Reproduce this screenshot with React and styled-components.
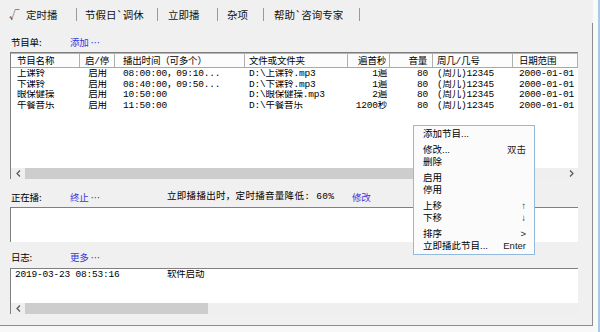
import React from 'react';
import styled, { createGlobalStyle } from 'styled-components';

const GlobalStyle = createGlobalStyle`
  html, body {
    margin: 0;
    padding: 0;
    background: #f8f8f8;
  }
  body {
    width: 600px;
    height: 332px;
    overflow: hidden;
    font-family: "Liberation Mono", "Noto Sans CJK SC", monospace;
    font-size: 9.5px;
    letter-spacing: -0.2px;
    color: #000;
  }
`;

const Window = styled.div`
  position: relative;
  display: flex;
  width: 600px;
  height: 332px;
  background: #f8f8f8;
`;

const Main = styled.div`
  width: 593px;
  display: flex;
  flex-direction: column;
`;

const Frame = styled.div`
  flex: 1;
  border-right: 2px solid #a8c9e8;
  background: #f9f9f9;
`;

const TabBar = styled.div`
  display: flex;
  align-items: center;
  height: 23px;
  padding-top: 5px;
  box-sizing: border-box;
  background: #f0f0f0;
`;

const Tab = styled.div`
  width: ${(p) => p.$w}px;
  padding-left: ${(p) => p.$pl}px;
  box-sizing: border-box;
  height: 13px;
  line-height: 13px;
  border-right: 1px solid #9a9a9a;
  font-family: "Noto Sans CJK SC", sans-serif;
  font-size: 10.5px;
  letter-spacing: 0;
  color: #111;
  white-space: nowrap;
`;

const Check = styled.span`
  display: inline-block;
  width: 17px;
  color: #333;
`;

const Panel = styled.div`
  height: 303px;
  box-sizing: border-box;
  display: flex;
  flex-direction: column;
  padding: 13px 14px 0 10px;
  background: #f0f0f0;
  border-right: 1px solid #8c8c8c;
  border-bottom: 1px solid #8c8c8c;
`;

const LabelRow = styled.div`
  display: flex;
  align-items: center;
  height: 12px;
  line-height: 12px;
  padding-left: 1px;
  margin-top: ${(p) => p.$mt || 0}px;
  white-space: nowrap;
`;

const Label = styled.span`
  width: 59px;
  font-family: "Noto Sans CJK SC", sans-serif;
`;

const Link = styled.span`
  width: ${(p) => (p.$w ? `${p.$w}px` : 'auto')};
  color: #3535dc;
  font-family: "Noto Sans CJK SC", sans-serif;
`;

const Message = styled.span`
  width: 185px;
  letter-spacing: 0.3px;
`;

const Box = styled.div`
  height: ${(p) => p.$h}px;
  margin-top: ${(p) => p.$mt}px;
  box-sizing: border-box;
  display: flex;
  flex-direction: column;
  background: #fff;
  border-top: 1px solid #7f7f7f;
  border-left: 1px solid #7f7f7f;
`;

const Header = styled.div`
  display: flex;
  height: 15px;
  box-sizing: border-box;
  border-top: 1px solid #b4b4b4;
  border-bottom: 1px solid #a8a8a8;
  background: #fcfcfc;
`;

const HeadCell = styled.div`
  width: ${(p) => p.$w}px;
  box-sizing: border-box;
  padding: 2px ${(p) => p.$pr || 0}px 0 ${(p) => p.$pl || 0}px;
  text-align: ${(p) => p.$align || 'left'};
  line-height: 11px;
  border-right: 1px solid #b0b0b0;
  white-space: nowrap;
  overflow: hidden;
`;

const Rows = styled.div`
  padding-top: 1px;
`;

const Row = styled.div`
  display: flex;
  height: 10.5px;
  line-height: 10.5px;
`;

const Cell = styled.div`
  width: ${(p) => p.$w}px;
  box-sizing: border-box;
  padding: 0 ${(p) => p.$pr || 0}px 0 ${(p) => p.$pl || 0}px;
  text-align: ${(p) => p.$align || 'left'};
  white-space: nowrap;
  overflow: hidden;
`;

const Spacer = styled.div`
  flex: 1;
`;

const ScrollBar = styled.div`
  display: flex;
  align-items: stretch;
  height: 11px;
  background: #efefef;
`;

const Arrow = styled.div`
  width: 14px;
  display: flex;
  align-items: center;
  justify-content: center;
`;

const Thumb = styled.div`
  width: ${(p) => p.$w}px;
  background: #cdcdcd;
`;

const Menu = styled.div`
  position: absolute;
  left: 413px;
  top: 125px;
  width: 122px;
  height: 130px;
  box-sizing: border-box;
  padding: 2px 0;
  background: #fbfbfb;
  border: 1px solid #93b9dd;
  font-family: "Liberation Sans", "Noto Sans CJK SC", sans-serif;
  letter-spacing: 0;
`;

const MenuGroup = styled.div`
  & + & {
    margin-top: 4px;
  }
`;

const MenuItem = styled.div`
  display: flex;
  justify-content: space-between;
  height: 12px;
  line-height: 12px;
  padding: 0 8px 0 9px;
  white-space: nowrap;
`;

const Key = styled.span`
  color: #222;
`;

const columns = [
  { w: 69, pl: 6 },
  { w: 35, align: 'center' },
  { w: 130, pl: 8 },
  { w: 103, pl: 4 },
  { w: 42, align: 'right', pr: 3 },
  { w: 43, align: 'right', pr: 5 },
  { w: 80, pl: 4 },
  { w: 65, pl: 6 },
];

const heads = ['节目名称', '启/停', '播出时间（可多个）', '文件或文件夹', '遍首秒', '音量', '周几/几号', '日期范围'];

const programs = [
  ['上课铃', '启用', '08:00:00，09:10...', 'D:\\上课铃.mp3', '1遍', '80', '(周几)12345', '2000-01-01'],
  ['下课铃', '启用', '08:40:00，09:50...', 'D:\\下课铃.mp3', '1遍', '80', '(周几)12345', '2000-01-01'],
  ['眼保健操', '启用', '10:50:00', 'D:\\眼保健操.mp3', '2遍', '80', '(周几)12345', '2000-01-01'],
  ['午餐音乐', '启用', '11:50:00', 'D:\\午餐音乐', '1200秒', '80', '(周几)12345', '2000-01-01'],
];

const menu = [
  [['添加节目...', '']],
  [['修改...', '双击'], ['删除', '']],
  [['启用', ''], ['停用', '']],
  [['上移', '↑'], ['下移', '↓']],
  [['排序', '>'], ['立即播此节目...', 'Enter']],
];

const Chevron = function ({ right }) {
  return (
    <svg width="5" height="7" viewBox="0 0 5 7">
      <polyline
        points={right ? '1,0.5 4,3.5 1,6.5' : '4,0.5 1,3.5 4,6.5'}
        fill="none"
        stroke="#555"
        strokeWidth="1.2"
      />
    </svg>
  );
};

const App = function () {
  return (
    <Window>
      <GlobalStyle />
      <Main>
        <TabBar>
          <Tab $w={77} $pl={9}><Check>√</Check>定时播</Tab>
          <Tab $w={81} $pl={8}>节假日`调休</Tab>
          <Tab $w={60} $pl={10}>立即播</Tab>
          <Tab $w={46} $pl={9}>杂项</Tab>
          <Tab $w={96} $pl={10}>帮助`咨询专家</Tab>
        </TabBar>
        <Panel>
          <LabelRow>
            <Label>节目单:</Label>
            <Link>添加 ⋯</Link>
          </LabelRow>
          <Box $h={127} $mt={4}>
            <Header>
              {heads.map((h, i) => (
                <HeadCell key={h} $w={columns[i].w} $pl={columns[i].pl} $pr={columns[i].pr} $align={columns[i].align}>
                  {h}
                </HeadCell>
              ))}
            </Header>
            <Rows>
              {programs.map((r) => (
                <Row key={r[0]}>
                  {r.map((v, i) => (
                    <Cell key={i} $w={columns[i].w} $pl={columns[i].pl} $pr={columns[i].pr} $align={columns[i].align}>
                      {v}
                    </Cell>
                  ))}
                </Row>
              ))}
            </Rows>
            <Spacer />
            <ScrollBar>
              <Arrow><Chevron /></Arrow>
              <Thumb $w={455} />
              <Spacer />
              <Arrow><Chevron right /></Arrow>
            </ScrollBar>
          </Box>
          <LabelRow $mt={12}>
            <Label>正在播:</Label>
            <Link $w={97}>终止 ⋯</Link>
            <Message>立即播播出时，定时播音量降低: 60%</Message>
            <Link>修改</Link>
          </LabelRow>
          <Box $h={35} $mt={4} />
          <LabelRow $mt={9}>
            <Label>日志:</Label>
            <Link>更多 ⋯</Link>
          </LabelRow>
          <Box $h={46} $mt={5}>
            <Rows>
              <Row>
                <Cell $w={156} $pl={4}>2019-03-23 08:53:16</Cell>
                <Cell $w={120}>软件启动</Cell>
              </Row>
            </Rows>
            <Spacer />
            <ScrollBar>
              <Arrow><Chevron /></Arrow>
              <Thumb $w={183} />
            </ScrollBar>
          </Box>
        </Panel>
      </Main>
      <Frame />
      <Menu>
        {menu.map((g, gi) => (
          <MenuGroup key={gi}>
            {g.map(([t, k]) => (
              <MenuItem key={t}>
                <span>{t}</span>
                <Key>{k}</Key>
              </MenuItem>
            ))}
          </MenuGroup>
        ))}
      </Menu>
    </Window>
  );
};

export default App;
